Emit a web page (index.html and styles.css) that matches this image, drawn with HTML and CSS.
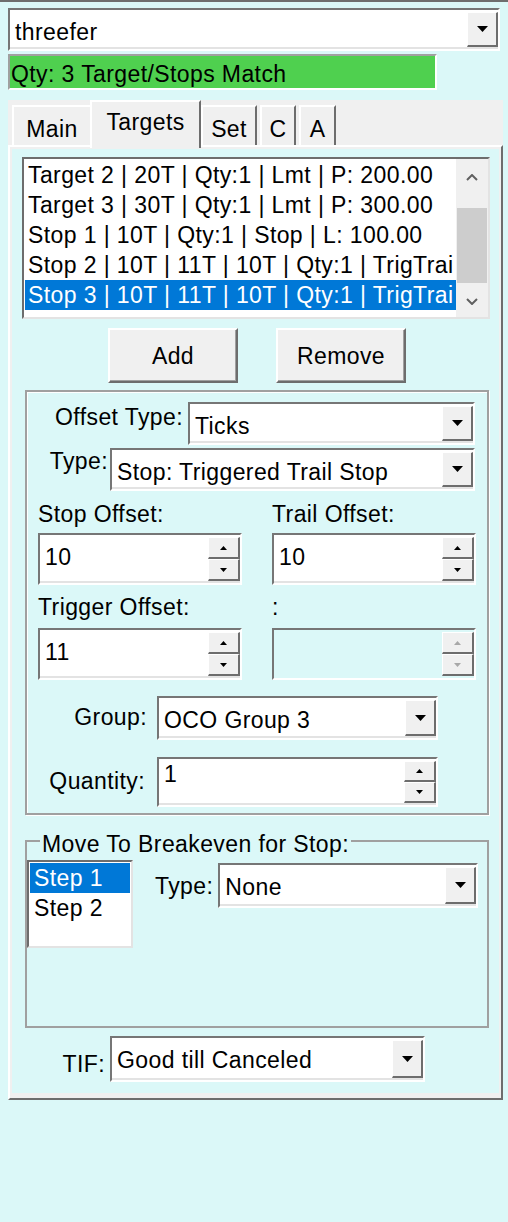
FILE: index.html
```html
<!DOCTYPE html>
<html>
<head>
<meta charset="utf-8">
<title>Targets</title>
<link rel="stylesheet" href="styles.css">
</head>
<body>
<div class="window">
  <div class="combo combo-top">
    <span class="val">threefer</span>
    <span class="ddbtn"><svg viewBox="0 0 11 6"><polygon points="0,0 11,0 5.5,6" fill="#000"/></svg></span>
  </div>
  <div class="status">Qty: 3 Target/Stops Match</div>

  <div class="tabctl">
    <div class="tabs">
      <div class="tab tab-main">Main</div>
      <div class="tab tab-sel">Targets</div>
      <div class="tab tab-set">Set</div>
      <div class="tab tab-c">C</div>
      <div class="tab tab-a">A</div>
    </div>
    <div class="page">
      <div class="content">
        <div class="listbox">
          <div class="items">
            <div class="item">Target 2 | 20T | Qty:1 | Lmt | P: 200.00</div>
            <div class="item">Target 3 | 30T | Qty:1 | Lmt | P: 300.00</div>
            <div class="item">Stop 1 | 10T | Qty:1 | Stop | L: 100.00</div>
            <div class="item">Stop 2 | 10T | 11T | 10T | Qty:1 | TrigTrai</div>
            <div class="item sel">Stop 3 | 10T | 11T | 10T | Qty:1 | TrigTrai</div>
          </div>
          <div class="vscroll">
            <div class="sbup"><svg viewBox="0 0 12 7"><polyline points="1,6 6,1 11,6" fill="none" stroke="#606060" stroke-width="2"/></svg></div>
            <div class="track"><div class="thumb"></div></div>
            <div class="sbdn"><svg viewBox="0 0 12 7"><polyline points="1,1 6,6 11,1" fill="none" stroke="#606060" stroke-width="2"/></svg></div>
          </div>
        </div>

        <div class="btnrow">
          <div class="btn">Add</div>
          <div class="btn">Remove</div>
        </div>

        <div class="group g1">
          <div class="row r-offset">
            <div class="lbl">Offset Type:</div>
            <div class="combo">
              <span class="val">Ticks</span>
              <span class="ddbtn"><svg viewBox="0 0 11 6"><polygon points="0,0 11,0 5.5,6" fill="#000"/></svg></span>
            </div>
          </div>
          <div class="row r-type">
            <div class="lbl">Type:</div>
            <div class="combo">
              <span class="val">Stop: Triggered Trail Stop</span>
              <span class="ddbtn"><svg viewBox="0 0 11 6"><polygon points="0,0 11,0 5.5,6" fill="#000"/></svg></span>
            </div>
          </div>

          <div class="spins">
            <div class="cap">Stop Offset:</div>
            <div class="cap">Trail Offset:</div>
            <div class="spin">
              <span class="val">10</span>
              <span class="spinbtns">
                <span class="sb"><svg viewBox="0 0 7 4"><polygon points="0,4 7,4 3.5,0" fill="#000"/></svg></span>
                <span class="sb"><svg viewBox="0 0 7 4"><polygon points="0,0 7,0 3.5,4" fill="#000"/></svg></span>
              </span>
            </div>
            <div class="spin">
              <span class="val">10</span>
              <span class="spinbtns">
                <span class="sb"><svg viewBox="0 0 7 4"><polygon points="0,4 7,4 3.5,0" fill="#000"/></svg></span>
                <span class="sb"><svg viewBox="0 0 7 4"><polygon points="0,0 7,0 3.5,4" fill="#000"/></svg></span>
              </span>
            </div>
            <div class="cap cap2">Trigger Offset:</div>
            <div class="cap cap2">:</div>
            <div class="spin">
              <span class="val">11</span>
              <span class="spinbtns">
                <span class="sb"><svg viewBox="0 0 7 4"><polygon points="0,4 7,4 3.5,0" fill="#000"/></svg></span>
                <span class="sb"><svg viewBox="0 0 7 4"><polygon points="0,0 7,0 3.5,4" fill="#000"/></svg></span>
              </span>
            </div>
            <div class="spin disabled">
              <span class="val"></span>
              <span class="spinbtns">
                <span class="sb"><svg viewBox="0 0 7 4"><polygon points="0,4 7,4 3.5,0" fill="#a8a8a8"/></svg></span>
                <span class="sb"><svg viewBox="0 0 7 4"><polygon points="0,0 7,0 3.5,4" fill="#a8a8a8"/></svg></span>
              </span>
            </div>
          </div>

          <div class="row r-group">
            <div class="lbl">Group:</div>
            <div class="combo">
              <span class="val">OCO Group 3</span>
              <span class="ddbtn"><svg viewBox="0 0 11 6"><polygon points="0,0 11,0 5.5,6" fill="#000"/></svg></span>
            </div>
          </div>
          <div class="row r-qty">
            <div class="lbl">Quantity:</div>
            <div class="spin">
              <span class="val">1</span>
              <span class="spinbtns">
                <span class="sb"><svg viewBox="0 0 7 4"><polygon points="0,4 7,4 3.5,0" fill="#000"/></svg></span>
                <span class="sb"><svg viewBox="0 0 7 4"><polygon points="0,0 7,0 3.5,4" fill="#000"/></svg></span>
              </span>
            </div>
          </div>
        </div>

        <fieldset class="g2">
          <legend>Move To Breakeven for Stop:</legend>
          <div class="g2body">
            <div class="steps">
              <div class="it sel">Step 1</div>
              <div class="it">Step 2</div>
            </div>
            <div class="lbl g2lbl">Type:</div>
            <div class="combo g2combo">
              <span class="val">None</span>
              <span class="ddbtn"><svg viewBox="0 0 11 6"><polygon points="0,0 11,0 5.5,6" fill="#000"/></svg></span>
            </div>
          </div>
        </fieldset>

        <div class="row r-tif">
          <div class="lbl">TIF:</div>
          <div class="combo">
            <span class="val">Good till Canceled</span>
            <span class="ddbtn"><svg viewBox="0 0 11 6"><polygon points="0,0 11,0 5.5,6" fill="#000"/></svg></span>
          </div>
        </div>
      </div>
    </div>
  </div>
</div>
</body>
</html>
```

FILE: styles.css
```css
* { box-sizing: border-box; }
html, body { margin: 0; padding: 0; }
body {
  background: #dbf8f8;
  font-family: "Liberation Sans", Arial, sans-serif;
  font-size: 23px;
  line-height: 26px;
  letter-spacing: 0.4px;
  color: #000;
  width: 508px;
  height: 1222px;
  overflow: hidden;
}
.window {
  border-top: 2px solid #6e6e6e;
  padding: 6px 0 0 8px;
}

/* combo box */
.combo {
  display: flex;
  height: 43px;
  border: 2px solid;
  border-color: #767676 #ffffff #ffffff #767676;
  background: #fff;
  box-shadow: inset 0 -2px 0 #e3e3e3;
  flex: none;
}
.combo-top { width: 492px; }
.val {
  flex: 1;
  padding: 9px 0 0 5px;
  white-space: nowrap;
  overflow: hidden;
}
.ddbtn {
  width: 31px;
  margin: 2px 0;
  background: #f0f0f0;
  border-style: solid;
  border-width: 1px 2px 2px 1px;
  border-color: #ffffff #6d6d6d #6d6d6d #ffffff;
  display: flex;
  align-items: center;
  justify-content: center;
}
.ddbtn svg { width: 11px; height: 6px; display: block; }

/* status */
.status {
  width: 429px;
  height: 36px;
  margin-top: 3px;
  background: #4fd04f;
  border: 2px solid;
  border-color: #a0a0a0 #ffffff #ffffff #a0a0a0;
  padding: 5px 0 0 1px;
  white-space: nowrap;
}

/* tab control */
.tabctl {
  margin-top: 10px;
  width: 495px;
  background: #f0f0f0;
}
.tabs {
  display: flex;
  align-items: flex-end;
  height: 45px;
  padding-left: 4px;
}
.tab {
  height: 40px;
  background: #f0f0f0;
  border-style: solid;
  border-width: 2px 2px 0 2px;
  border-color: #ffffff #6d6d6d #ffffff #ffffff;
  text-align: center;
  padding-top: 9px;
  white-space: nowrap;
}
.tab-main { width: 78px; border-right-width: 0; }
.tab-sel {
  width: 111px;
  height: 48px;
  margin-bottom: -3px;
  padding-top: 7px;
  position: relative;
  z-index: 1;
}
.tab-set { width: 56px; }
.tab-c { width: 36px; margin-left: 3px; }
.tab-a { width: 37px; margin-left: 3px; }

.page {
  border: 2px solid;
  border-color: #ffffff #6d6d6d #6d6d6d #ffffff;
  padding: 2px 2px 5px 2px;
  background: #f0f0f0;
}
.content {
  background: #dbf8f8;
  height: 944px;
  padding-top: 8px;
}

/* list box */
.listbox {
  margin-left: 10px;
  width: 468px;
  height: 162px;
  border: 2px solid;
  border-color: #6d6d6d #e3e3e3 #e3e3e3 #6d6d6d;
  background: #fff;
  display: flex;
}
.items {
  flex: 1;
  padding-top: 1px;
  overflow: hidden;
  white-space: nowrap;
}
.item {
  height: 30px;
  line-height: 30px;
  padding-left: 4px;
}
.item.sel {
  background: #0078d7;
  color: #fff;
  margin-left: 1px;
  padding-left: 3px;
}
.vscroll {
  width: 32px;
  background: #f0f0f0;
  display: flex;
  flex-direction: column;
}
.sbup, .sbdn {
  display: flex;
  align-items: center;
  justify-content: center;
}
.sbup { height: 36px; }
.sbdn { height: 32px; }
.sbup svg, .sbdn svg { width: 12px; height: 7px; display: block; }
.track { flex: 1; padding: 13px 1px 0 1px; }
.thumb { height: 75px; background: #cdcdcd; }

/* buttons */
.btnrow {
  display: flex;
  gap: 38px;
  margin-top: 9px;
  padding-left: 96px;
}
.btn {
  width: 130px;
  height: 55px;
  background: #f0f0f0;
  border: 2px solid;
  border-color: #ffffff #6d6d6d #6d6d6d #ffffff;
  box-shadow: inset -1px -1px 0 #a0a0a0;
  display: flex;
  align-items: center;
  justify-content: center;
}

/* group boxes */
.group {
  border: 2px solid #a0a0a0;
  box-shadow: 1px 1px 0 #ffffff, inset 1px 1px 0 #ffffff;
}
.g1 {
  margin: 7px 0 0 13px;
  width: 464px;
  height: 425px;
}
.row {
  display: flex;
  align-items: flex-start;
}
.lbl {
  flex: none;
  text-align: right;
  white-space: nowrap;
}
.r-offset { margin-top: 10px; }
.r-offset .lbl { width: 156px; margin-top: 2px; }
.r-offset .combo { width: 287px; margin-left: 5px; }
.r-type { margin-top: 3px; }
.r-type .lbl { width: 81px; margin-top: 0; }
.r-type .combo { width: 365px; margin-left: 2px; }

.spins {
  display: grid;
  grid-template-columns: 204px 204px;
  column-gap: 30px;
  padding-left: 11px;
  margin-top: 10px;
}
.cap { margin-bottom: 6px; white-space: nowrap; }
.cap2 { margin-top: 9px; margin-bottom: 8px; }

/* spin box */
.spin {
  display: flex;
  height: 52px;
  border: 2px solid;
  border-color: #767676 #ffffff #ffffff #767676;
  background: #fff;
  box-shadow: inset 0 -2px 0 #e3e3e3;
  flex: none;
}
.spin.disabled { background: #dbf8f8; box-shadow: none; }
.spinbtns {
  width: 32px;
  margin: 2px 0;
  display: flex;
  flex-direction: column;
}
.sb {
  flex: 1;
  background: #f0f0f0;
  border-style: solid;
  border-width: 1px 2px 2px 1px;
  border-color: #ffffff #6d6d6d #6d6d6d #ffffff;
  display: flex;
  align-items: center;
  justify-content: center;
}
.sb svg { width: 7px; height: 4px; display: block; }

.r-group { margin-top: 16px; }
.r-group .lbl { width: 120px; margin-top: 8px; }
.r-group .combo { width: 281px; height: 44px; margin-left: 10px; }
.r-qty { margin-top: 17px; }
.r-qty .lbl { width: 118px; margin-top: 11px; }
.r-qty .spin { width: 281px; height: 50px; margin-left: 12px; }
.r-qty .spin .val { padding-top: 2px; }

/* breakeven group */
.g2 {
  margin: 9px 0 0 13px;
  width: 464px;
  padding: 3px 0 0 0;
  border: 2px solid #a0a0a0;
  min-width: 0;
}
.g2 legend {
  margin-left: 13px;
  padding: 7px 2px 0 2px;
  line-height: 26px;
}
.g2body {
  display: flex;
  align-items: flex-start;
  height: 166px;
}
.steps {
  width: 106px;
  height: 88px;
  background: #fff;
  border: 2px solid;
  border-color: #6d6d6d #e3e3e3 #e3e3e3 #6d6d6d;
  padding: 1px;
}
.steps .it {
  height: 30px;
  line-height: 30px;
  padding-left: 4px;
}
.steps .it.sel { background: #0078d7; color: #fff; }
.g2lbl { margin-left: 22px; margin-top: 13px; }
.g2combo { width: 260px; height: 45px; margin-left: 5px; margin-top: 3px; }

/* TIF */
.r-tif { margin-top: 8px; }
.r-tif .lbl { width: 93px; margin-top: 15px; }
.r-tif .combo { width: 315px; height: 46px; margin-left: 5px; }
```
